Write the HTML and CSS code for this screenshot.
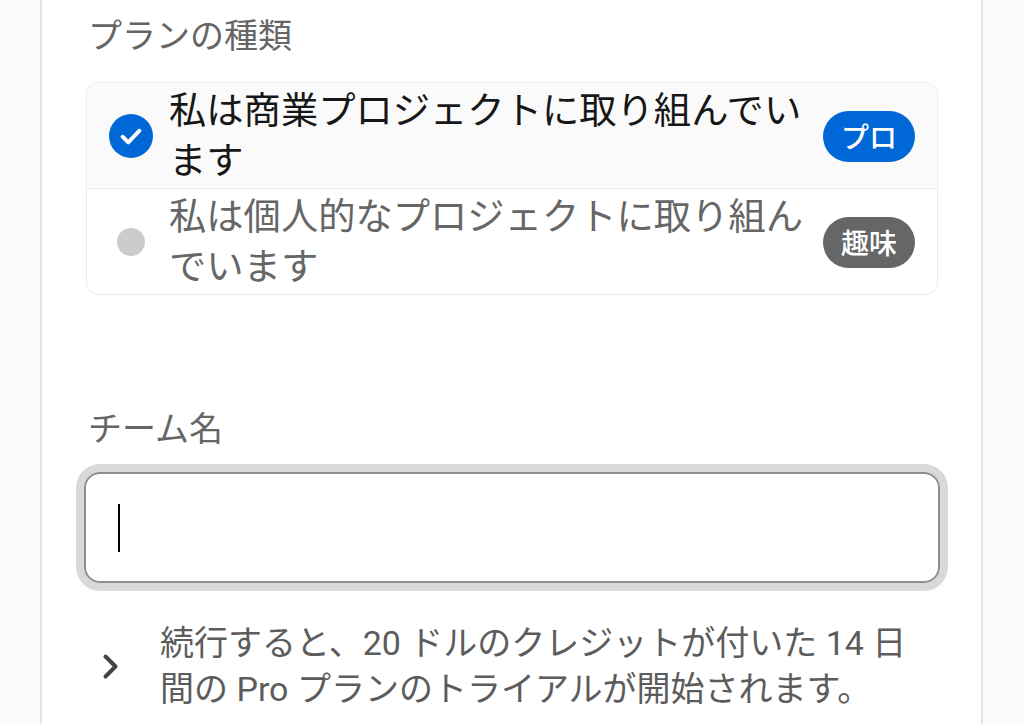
FILE: index.html
```html
<!DOCTYPE html>
<html lang="ja">
<head>
    <meta charset="UTF-8">
    <meta name="viewport" content="width=device-width, initial-scale=1.0">
    <title>チームを作成</title>
    <link rel="stylesheet" href="styles.css">
</head>
<body>
    <div class="card">
        <p class="field-label">プランの種類</p>

        <div class="plan-options">
            <div class="plan-option selected">
                <span class="radio">
                    <svg class="radio-check" viewBox="0 0 24 24" width="44" height="44">
                        <circle cx="12" cy="12" r="12" fill="#0068d6"/>
                        <path d="M7.4 12.4l3.1 3.1 6.1-6.4" fill="none" stroke="#fff" stroke-width="2.1" stroke-linecap="round" stroke-linejoin="round"/>
                    </svg>
                </span>
                <span class="plan-text">私は商業プロジェクトに取り組んでいます</span>
                <span class="badge badge-pro">プロ</span>
            </div>
            <div class="plan-option">
                <span class="radio">
                    <span class="radio-dot"></span>
                </span>
                <span class="plan-text">私は個人的なプロジェクトに取り組んでいます</span>
                <span class="badge badge-hobby">趣味</span>
            </div>
        </div>

        <p class="field-label team-label">チーム名</p>
        <div class="text-input">
            <span class="caret"></span>
        </div>

        <div class="trial-note">
            <svg class="chevron" viewBox="0 0 18 27" width="18" height="27">
                <path d="M3.5 3.5l10 10-10 10" fill="none" stroke="#444" stroke-width="4" stroke-linecap="round" stroke-linejoin="round"/>
            </svg>
            <p>続行すると、20 ドルのクレジットが付いた 14 日間の Pro プランのトライアルが開始されます。</p>
        </div>
    </div>
</body>
</html>
```

FILE: styles.css
```css
/* Basic Reset */
* {
    margin: 0;
    padding: 0;
    box-sizing: border-box;
}

body {
    font-family: Roboto, "Noto Sans CJK JP", sans-serif;
    background-color: #fafafa;
    color: #171717;
    height: 100vh;
    overflow: hidden;
}

.card {
    margin-left: 40px;
    width: 943px;
    height: 100vh;
    background-color: #ffffff;
    border-left: 2px solid #e6e6e6;
    border-right: 2px solid #e6e6e6;
    padding: 12px 43px 0 44px;
}

.field-label {
    font-size: 34px;
    line-height: 48px;
    color: #666666;
    padding-left: 2px;
}

/* Plan selector */
.plan-options {
    margin-top: 22px;
    border: 1px solid #ebebeb;
    border-radius: 12px;
    overflow: hidden;
}

.plan-option {
    display: flex;
    align-items: center;
    padding: 3px 22px 2px 22px;
}

.plan-option + .plan-option {
    border-top: 1px solid #ebebeb;
}

.plan-option.selected {
    background-color: #fafafa;
}

.radio {
    width: 44px;
    height: 44px;
    flex-shrink: 0;
    display: flex;
    align-items: center;
    justify-content: center;
    margin-right: 16px;
}

.radio-check {
    display: block;
}

.radio-dot {
    width: 28px;
    height: 28px;
    border-radius: 50%;
    background-color: #cccccc;
}

.plan-text {
    width: 642px;
    font-size: 37.3px;
    line-height: 50px;
    color: #666666;
}

.selected .plan-text {
    color: #171717;
}

.badge {
    margin-left: auto;
    width: 92px;
    height: 51px;
    border-radius: 26px;
    display: flex;
    align-items: center;
    justify-content: center;
    color: #ffffff;
    font-size: 28px;
    font-weight: 500;
}

.badge-pro {
    background-color: #0068d6;
}

.badge-hobby {
    background-color: #666666;
}

/* Team name */
.team-label {
    margin-top: 110px;
}

.text-input {
    margin: 19px -2px 0 -2px;
    height: 111px;
    border: 2px solid #8f8f8f;
    border-radius: 16px;
    box-shadow: 0 0 0 8px #d9d9d9;
    display: flex;
    align-items: center;
    padding-left: 32px;
}

.caret {
    width: 2px;
    height: 48px;
    background-color: #000000;
}

/* Trial note */
.trial-note {
    margin-top: 37px;
    display: flex;
    align-items: center;
    padding-left: 16px;
}

.chevron {
    flex-shrink: 0;
    margin-right: 40px;
}

.trial-note p {
    width: 778px;
    font-size: 34px;
    line-height: 46px;
    color: #5c5c5c;
}
```
